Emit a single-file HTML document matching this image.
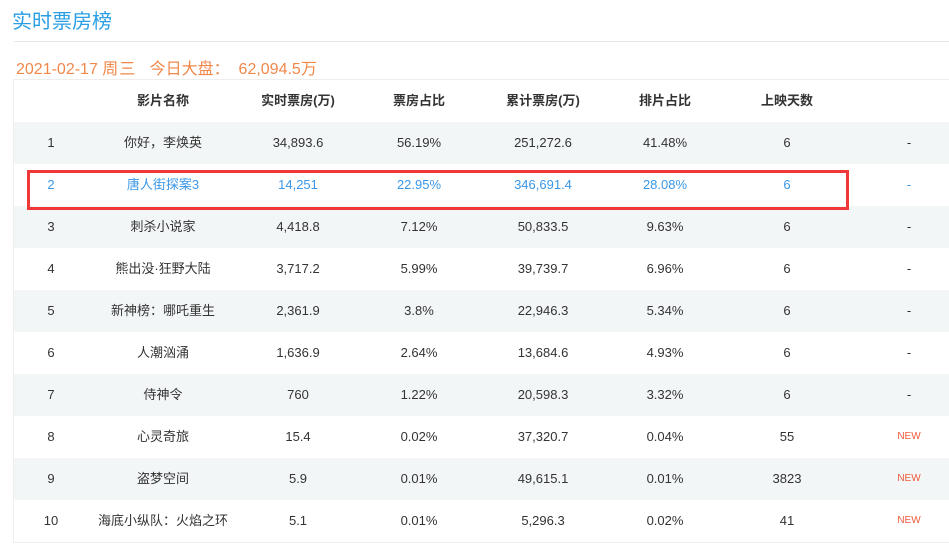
<!DOCTYPE html><html><head><meta charset="utf-8"><style>
body{margin:0;width:949px;height:546px;background:#fff;font-family:"Liberation Sans","Noto Sans CJK SC",sans-serif;position:relative;overflow:hidden}
.t{position:absolute;left:12px;top:5px;font-size:20px;color:#2a9ee4}
.hr{position:absolute;left:14px;right:0;top:41px;height:1px;background:#e8e8e8}
.d{position:absolute;left:16px;top:55px;font-size:16px;color:#f0884a;white-space:pre}
.tb{position:absolute;left:13px;top:79px;width:936px;border-left:1px solid #eee;border-top:1px solid #eee}
.r{height:42px;position:relative;font-size:13px;color:#333}
.r.g{background:#f3f6f7}
.r span{position:absolute;top:0;line-height:42px;transform:translateX(-50%);white-space:nowrap}
.h{font-weight:bold}
.b{color:#3b97e6}
.n{font-size:10px;color:#f05a3a}
.box{position:absolute;left:27px;top:170px;width:816px;height:34px;border:3px solid #f03838}
</style></head><body>
<div class="t">实时票房榜</div><div class="hr"></div>
<div class="d">2021-02-17 <span style="letter-spacing:1px">周三</span>   今日大盘：  62,094.5万</div>
<div class="tb">
<div class="r h"><span style="left:149px">影片名称</span><span style="left:284px">实时票房(万)</span><span style="left:405px">票房占比</span><span style="left:529px">累计票房(万)</span><span style="left:651px">排片占比</span><span style="left:773px">上映天数</span></div>
<div class="r g"><span style="left:37px">1</span><span style="left:149px">你好，李焕英</span><span style="left:284px">34,893.6</span><span style="left:405px">56.19%</span><span style="left:529px">251,272.6</span><span style="left:651px">41.48%</span><span style="left:773px">6</span><span style="left:895px">-</span></div>
<div class="r b"><span style="left:37px">2</span><span style="left:149px">唐人街探案3</span><span style="left:284px">14,251</span><span style="left:405px">22.95%</span><span style="left:529px">346,691.4</span><span style="left:651px">28.08%</span><span style="left:773px">6</span><span style="left:895px">-</span></div>
<div class="r g"><span style="left:37px">3</span><span style="left:149px">刺杀小说家</span><span style="left:284px">4,418.8</span><span style="left:405px">7.12%</span><span style="left:529px">50,833.5</span><span style="left:651px">9.63%</span><span style="left:773px">6</span><span style="left:895px">-</span></div>
<div class="r"><span style="left:37px">4</span><span style="left:149px">熊出没·狂野大陆</span><span style="left:284px">3,717.2</span><span style="left:405px">5.99%</span><span style="left:529px">39,739.7</span><span style="left:651px">6.96%</span><span style="left:773px">6</span><span style="left:895px">-</span></div>
<div class="r g"><span style="left:37px">5</span><span style="left:149px">新神榜：哪吒重生</span><span style="left:284px">2,361.9</span><span style="left:405px">3.8%</span><span style="left:529px">22,946.3</span><span style="left:651px">5.34%</span><span style="left:773px">6</span><span style="left:895px">-</span></div>
<div class="r"><span style="left:37px">6</span><span style="left:149px">人潮汹涌</span><span style="left:284px">1,636.9</span><span style="left:405px">2.64%</span><span style="left:529px">13,684.6</span><span style="left:651px">4.93%</span><span style="left:773px">6</span><span style="left:895px">-</span></div>
<div class="r g"><span style="left:37px">7</span><span style="left:149px">侍神令</span><span style="left:284px">760</span><span style="left:405px">1.22%</span><span style="left:529px">20,598.3</span><span style="left:651px">3.32%</span><span style="left:773px">6</span><span style="left:895px">-</span></div>
<div class="r"><span style="left:37px">8</span><span style="left:149px">心灵奇旅</span><span style="left:284px">15.4</span><span style="left:405px">0.02%</span><span style="left:529px">37,320.7</span><span style="left:651px">0.04%</span><span style="left:773px">55</span><span class="n" style="left:895px">NEW</span></div>
<div class="r g"><span style="left:37px">9</span><span style="left:149px">盗梦空间</span><span style="left:284px">5.9</span><span style="left:405px">0.01%</span><span style="left:529px">49,615.1</span><span style="left:651px">0.01%</span><span style="left:773px">3823</span><span class="n" style="left:895px">NEW</span></div>
<div class="r" style="border-bottom:1px solid #eee"><span style="left:37px">10</span><span style="left:149px">海底小纵队：火焰之环</span><span style="left:284px">5.1</span><span style="left:405px">0.01%</span><span style="left:529px">5,296.3</span><span style="left:651px">0.02%</span><span style="left:773px">41</span><span class="n" style="left:895px">NEW</span></div>
</div>
<div class="box"></div>
</body></html>
